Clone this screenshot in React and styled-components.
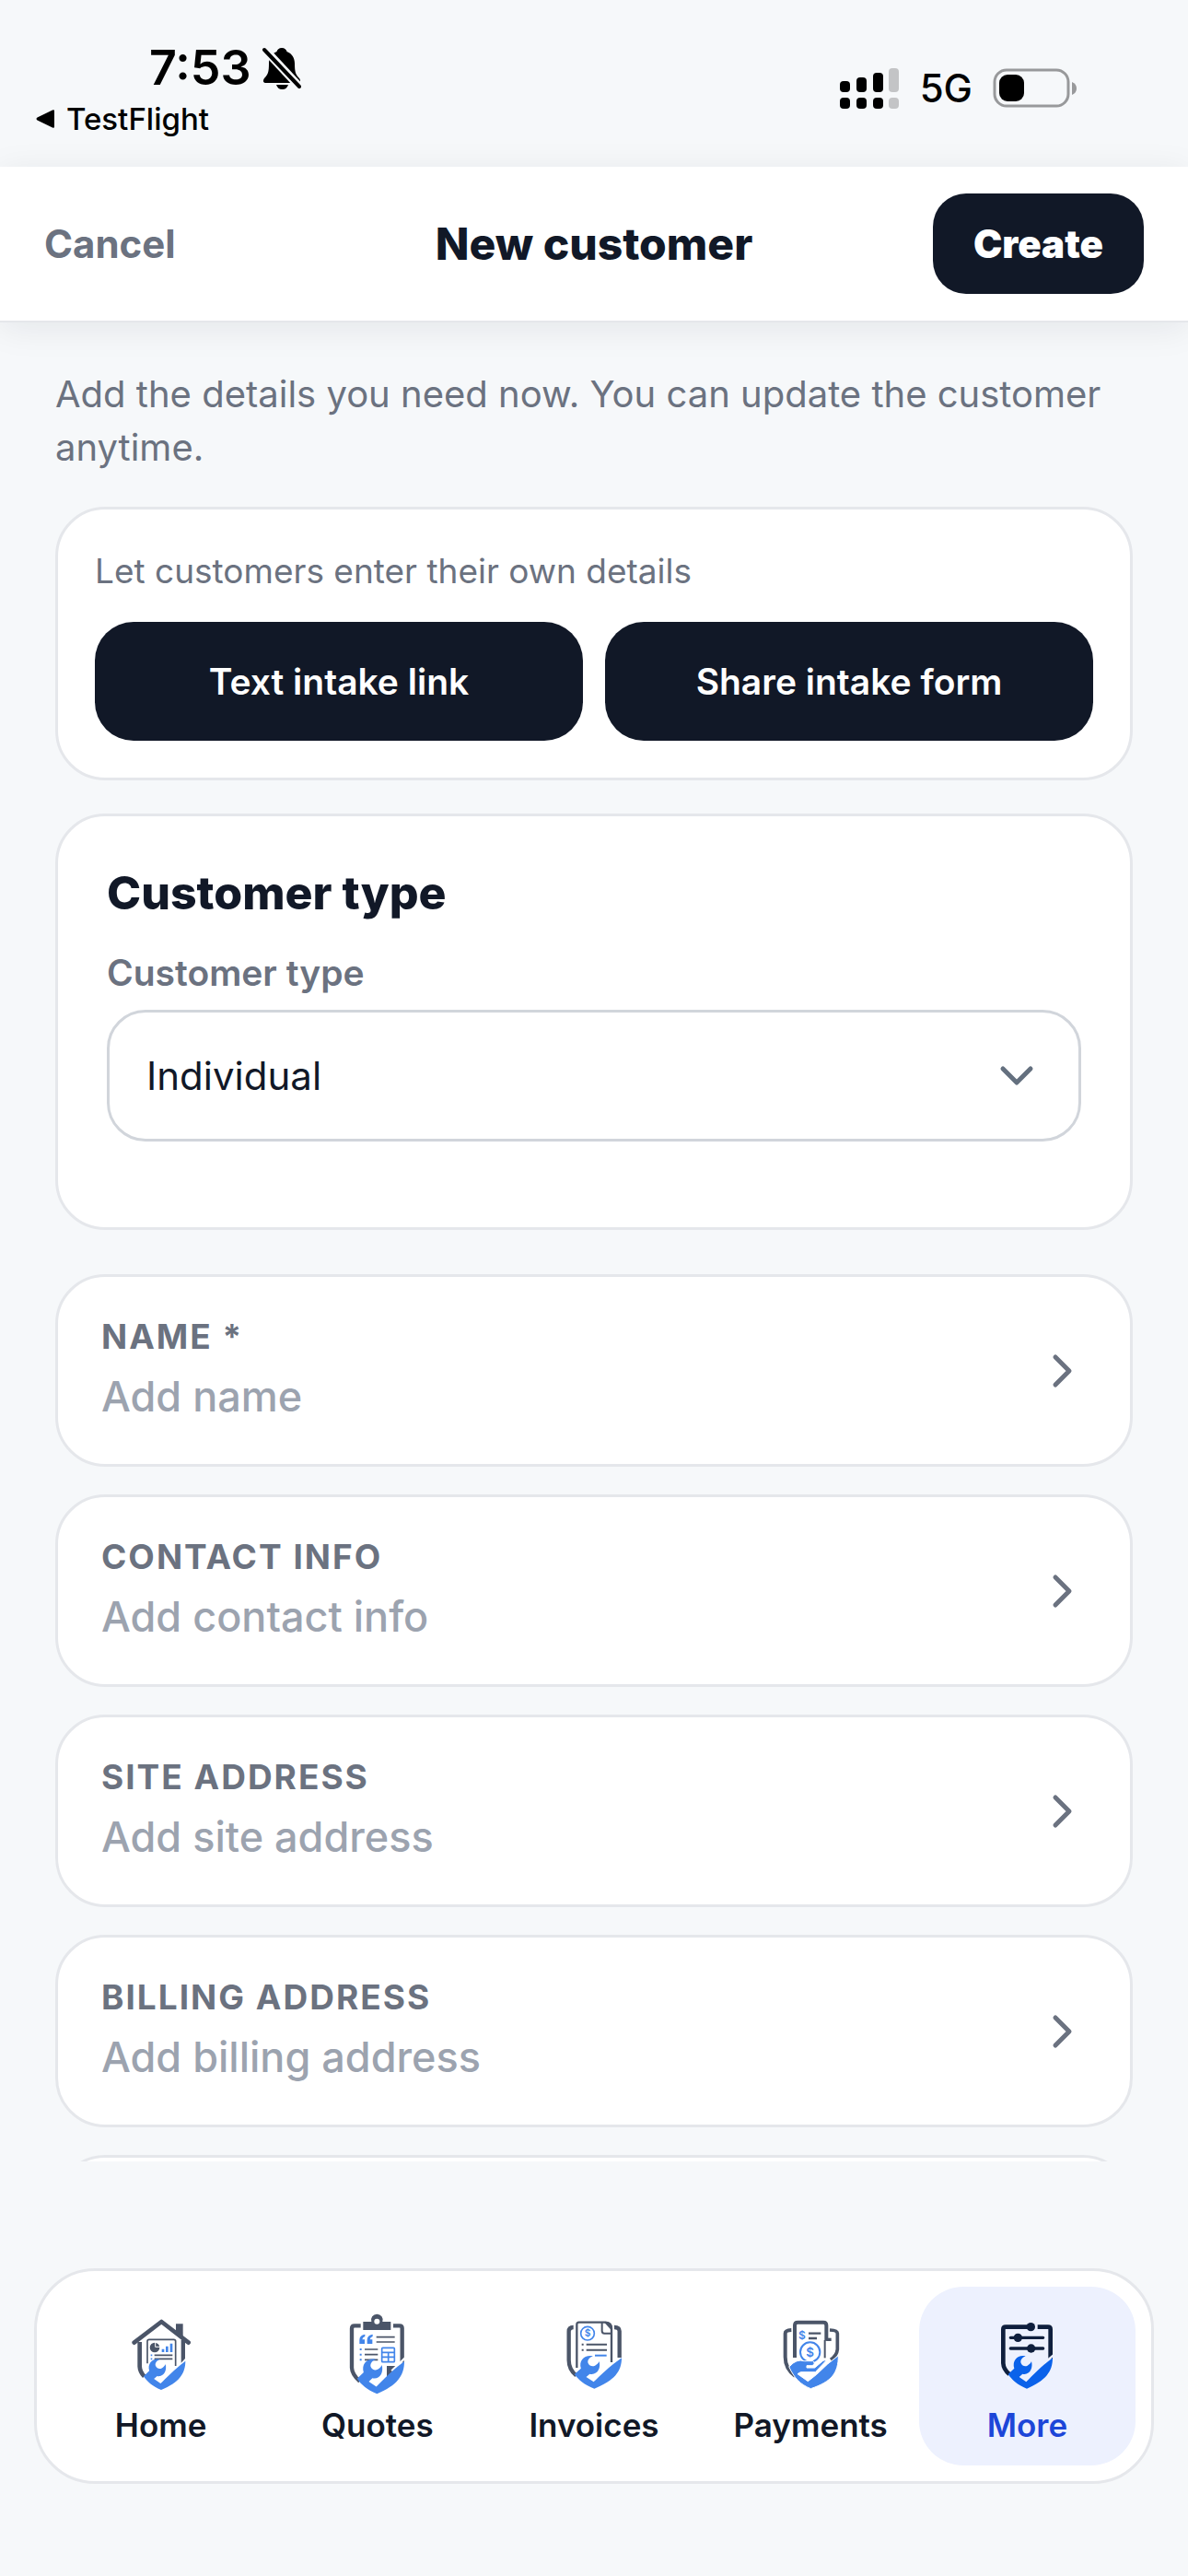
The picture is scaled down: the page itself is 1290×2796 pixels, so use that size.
import { useState } from "react";
import styled, { createGlobalStyle } from "styled-components";

const GlobalStyle = createGlobalStyle`
  * {
    box-sizing: border-box;
  }

  body {
    margin: 0;
    background: #f6f8fa;
    color: #111827;
    font-family: Inter, "Liberation Sans", sans-serif;
  }

  button,
  select {
    font-family: inherit;
  }
`;

const Screen = styled.div`
  display: flex;
  flex-direction: column;
  height: 100vh;
`;

const StatusBar = styled.div`
  display: flex;
  justify-content: space-between;
  align-items: flex-start;
  padding: 42px 120px 32px 39px;
  color: #000;
`;

const StatusLeft = styled.div`
  display: flex;
  flex-direction: column;
  gap: 3px;
`;

const Clock = styled.div`
  display: flex;
  align-items: center;
  gap: 12px;
  padding-left: 123px;
  font-size: 52px;
  font-weight: 600;
  line-height: 64px;
`;

const BackLink = styled.a`
  display: flex;
  align-items: center;
  gap: 12px;
  color: #000;
  font-size: 33px;
  font-weight: 500;
  line-height: 40px;
  text-decoration: none;
`;

const StatusRight = styled.div`
  display: flex;
  align-items: center;
  gap: 22px;
  padding-top: 26px;
  font-size: 42px;
  font-weight: 500;
  line-height: 56px;
`;

const Header = styled.header`
  display: grid;
  grid-template-columns: 1fr auto 1fr;
  align-items: center;
  padding: 29px 48px;
  background: #fff;
  border-bottom: 2px solid #e5e7eb;
  box-shadow: 0 6px 36px rgba(15, 23, 42, 0.08);
  z-index: 1;
`;

const Title = styled.h1`
  margin: 0;
  font-size: 48px;
  font-weight: 800;
  line-height: 56px;
`;

const CancelButton = styled.button`
  justify-self: start;
  padding: 0;
  border: none;
  background: none;
  color: #6b7280;
  font-size: 42px;
  font-weight: 700;
  line-height: 56px;
`;

const CreateButton = styled.button`
  justify-self: end;
  padding: 26px 44px;
  border: none;
  border-radius: 36px;
  background: #111827;
  color: #fff;
  font-size: 42px;
  font-weight: 900;
  line-height: 57px;
`;

const Content = styled.main`
  flex: 1;
  min-height: 0;
  overflow: hidden;
  padding: 49px 60px 0;
`;

const Intro = styled.p`
  margin: 0 0 35px;
  color: #6b7280;
  font-size: 40px;
  line-height: 58px;
`;

const Card = styled.section`
  border: 3px solid #e5e7eb;
  border-radius: 54px;
  background: #fff;
`;

const IntakeCard = styled(Card)`
  margin-bottom: 36px;
  padding: 39px 40px 40px;
`;

const IntakeText = styled.p`
  margin: 0 0 27px;
  color: #6b7280;
  font-size: 37px;
  line-height: 56px;
`;

const IntakeActions = styled.div`
  display: grid;
  grid-template-columns: 1fr 1fr;
  gap: 24px;
`;

const IntakeButton = styled.button`
  padding: 36px 24px;
  border: none;
  border-radius: 42px;
  background: #111827;
  color: #fff;
  font-size: 39px;
  font-weight: 600;
  line-height: 57px;
`;

const TypeCard = styled(Card)`
  margin-bottom: 48px;
  padding: 54px 53px 93px;
`;

const CardTitle = styled.h2`
  margin: 0 0 30px;
  font-size: 50px;
  font-weight: 800;
  line-height: 58px;
`;

const FieldLabel = styled.label`
  display: block;
  margin-bottom: 12px;
  color: #6b7280;
  font-size: 39px;
  font-weight: 600;
  line-height: 56px;
`;

const SelectWrap = styled.div`
  display: grid;
  align-items: center;

  > * {
    grid-area: 1 / 1;
  }

  svg {
    justify-self: end;
    margin-right: 50px;
    pointer-events: none;
  }
`;

const Select = styled.select`
  width: 100%;
  padding: 40px;
  appearance: none;
  border: 3px solid #d1d5db;
  border-radius: 42px;
  background: #fff;
  color: #111827;
  font-size: 42px;
  line-height: 57px;
`;

const SectionList = styled.div`
  display: flex;
  flex-direction: column;
  gap: 30px;
`;

const SectionRow = styled.button`
  display: flex;
  justify-content: space-between;
  align-items: center;
  padding: 38px 61px 38px 47px;
  border: 3px solid #e5e7eb;
  border-radius: 54px;
  background: #fff;
  text-align: left;
`;

const SectionLabel = styled.span`
  display: block;
  margin-bottom: 3px;
  color: #6b7280;
  font-size: 37px;
  font-weight: 700;
  letter-spacing: 2px;
  line-height: 54px;
  text-transform: uppercase;
`;

const SectionValue = styled.span`
  display: block;
  color: #9ca3af;
  font-size: 45px;
  font-weight: 500;
  line-height: 70px;
`;

const NotesField = styled.textarea`
  height: 209px;
  padding: 38px 47px;
  border: 3px solid #e5e7eb;
  border-radius: 54px;
  background: #fff;
  font-size: 42px;
  resize: none;
`;

const NavArea = styled.div`
  padding: 116px 37px 100px;
`;

const TabBar = styled.nav`
  display: grid;
  grid-template-columns: repeat(5, 1fr);
  padding: 17px;
  border: 3px solid #e5e7eb;
  border-radius: 66px;
  background: #fff;
`;

const Tab = styled.a`
  display: flex;
  flex-direction: column;
  align-items: center;
  gap: 10px;
  padding: 28px 0 22px;
  border-radius: 48px;
  background: ${(props) => (props.$active ? "#edf1fe" : "transparent")};
  color: ${(props) => (props.$active ? "#1d46d8" : "#111827")};
  font-size: 35px;
  font-weight: 600;
  line-height: 44px;
  text-decoration: none;
`;

const SLATE = "#4b5568";
const BLUE = "#4285ea";
const NAVY = "#0f1f3d";

const BellOffIcon = () => (
  <svg width="42" height="46" viewBox="0 0 42 46" aria-hidden="true">
    <path
      d="M21 1c3 0 5 2 5.500 4C32 7 35 12 35 18c0 9 1 12 5 16 2 3 1 5-2 5H4c-3 0-4-2-2-5 4-4 5-7 5-16 0-6 3-11 8.500-13C16 3 18 1 21 1z"
      fill="#000"
    />
    <path d="M15 41h13c-1 3-3 5-6.500 5S16 44 15 41z" fill="#000" />
    <path d="M0 0l41 44" stroke="#f6f8fa" strokeWidth="9" />
    <path d="M2 3l38 40" stroke="#000" strokeWidth="4" strokeLinecap="round" />
  </svg>
);

const BackArrow = () => (
  <svg width="21" height="22" viewBox="0 0 21 22" aria-hidden="true">
    <path d="M1.500 9.500L18 1.500q2-1 2 1v17q0 2-2 1L1.500 12.500q-2-1.500 0-3z" fill="#000" />
  </svg>
);

const SignalIcon = () => (
  <svg width="65" height="46" viewBox="0 0 65 46" aria-hidden="true">
    <g fill="#000">
      <rect x="0" y="15" width="11" height="12" rx="4" />
      <rect x="18" y="11" width="11" height="16" rx="4" />
      <rect x="36" y="6" width="11" height="21" rx="4" />
      <rect x="0" y="33" width="11" height="12" rx="4" />
      <rect x="18" y="33" width="11" height="12" rx="4" />
      <rect x="36" y="33" width="11" height="12" rx="4" />
    </g>
    <g fill="#c3c4c6">
      <rect x="53" y="1" width="11" height="26" rx="4" />
      <rect x="53" y="33" width="11" height="12" rx="4" />
    </g>
  </svg>
);

const BatteryIcon = () => (
  <svg width="92" height="44" viewBox="0 0 92 44" aria-hidden="true">
    <rect x="2" y="2" width="80" height="39" rx="13" fill="none" stroke="#98999b" strokeWidth="3" />
    <rect x="7" y="7" width="27" height="29" rx="9" fill="#000" />
    <path d="M86 15q5 2 5 7t-5 7z" fill="#98999b" />
  </svg>
);

const ChevronRight = () => (
  <svg width="26" height="40" viewBox="0 0 26 40" fill="none" aria-hidden="true">
    <path d="M6 5l15 15L6 35" stroke="#6b7280" strokeWidth="5" strokeLinecap="round" strokeLinejoin="round" />
  </svg>
);

const ChevronDown = () => (
  <svg width="40" height="26" viewBox="0 0 40 26" fill="none" aria-hidden="true">
    <path d="M5 5l15 15L35 5" stroke="#64707f" strokeWidth="5" strokeLinecap="round" strokeLinejoin="round" />
  </svg>
);

// lower half of the shield with the wrench, origin at the bottom tip
const WrenchShield = ({ x, y, sx = 1, sy = 1, color = BLUE }) => (
  <path
    transform={`translate(${x} ${y}) scale(${sx} ${sy})`}
    fill={color}
    d="M84-100C84-56 62-26 0 0C-31-13-49-29-61-47L-41-66C-49-92-29-112-4-106C-17-101-22-91-19-83C-15-74-6-71 2-75C9-79 13-84 15-89C21-68 10-43-14-48L-25-38L-2-22C18-42 44-70 84-100Z"
  />
);

const HomeIcon = () => (
  <svg width="90" height="90" viewBox="30 60 270 270" fill="none" aria-hidden="true">
    <path d="M213 97h23v45l-23-18z" fill={SLATE} />
    <path d="M77 158L166 90l88 68" stroke={SLATE} strokeWidth="14" strokeLinecap="round" strokeLinejoin="round" />
    <path d="M95 156v80q1 18 15 32" stroke={SLATE} strokeWidth="14" />
    <path d="M230 150h13v60l-13 14z" fill={SLATE} />
    <path d="M120 226v-72q0-6 6-6h80q6 0 6 6v80" stroke={SLATE} strokeWidth="5" />
    <circle cx="144" cy="174" r="16" fill={SLATE} />
    <path d="M146 156v16h17" stroke="#fff" strokeWidth="3" />
    <path d="M171 179v10M184 170v19M198 161v28" stroke={BLUE} strokeWidth="8" />
    <path d="M143 199h59M143 211h59" stroke={SLATE} strokeWidth="5" />
    <path d="M131 199h5M131 211h5" stroke={BLUE} strokeWidth="5" />
    <WrenchShield x="165" y="312" sx="0.94" sy="0.94" />
  </svg>
);

const QuotesIcon = () => (
  <svg width="90" height="90" viewBox="735 60 270 270" fill="none" aria-hidden="true">
    <path d="M815 103h-20q-9 0-9 9v128q1 22 26 44" stroke={SLATE} strokeWidth="13" />
    <path d="M921 103h21q8 0 8 8v112" stroke={SLATE} strokeWidth="13" />
    <path d="M823 90h27a19 19 0 1 1 36 0h27v27h-90z" fill={SLATE} />
    <circle cx="868" cy="89" r="9" fill="#fff" />
    <path d="M829 131q-18 3-18 18v13h17v-14h-8q1-8 9-10zM854 131q-18 3-18 18v13h17v-14h-8q1-8 9-10z" fill={BLUE} />
    <path d="M866 140h60M866 156h60M828 180h43M828 197h43M828 214h43" stroke={SLATE} strokeWidth="5" />
    <path d="M812 180h6M812 197h6M812 214h6" stroke={BLUE} strokeWidth="6" />
    <rect x="884" y="175" width="41" height="46" rx="3" stroke={BLUE} strokeWidth="5" />
    <path d="M884 190h41M884 205h41M905 190v30" stroke={BLUE} strokeWidth="5" />
    <path d="M900 234h38l-38 36z" fill={SLATE} />
    <path d="M962 206l-46 44" stroke="#fff" strokeWidth="7" />
    <WrenchShield x="868" y="325" sx="1.060" sy="1.060" />
  </svg>
);

const InvoicesIcon = () => (
  <svg width="90" height="90" viewBox="179 60 270 270" fill="none" aria-hidden="true">
    <path d="M247 108q-15 0-15 14v93q0 30 24 50" stroke={SLATE} strokeWidth="13" />
    <path d="M380 108q17 0 17 13v86" stroke={SLATE} strokeWidth="13" />
    <path d="M258 240V99q0-7 7-7h87q19 2 19 19v111" stroke={SLATE} strokeWidth="7" />
    <path d="M340 92v28q0 8 8 8h23" stroke={SLATE} strokeWidth="6" />
    <path d="M346 91h14q10 4 12 12v16z" fill={SLATE} />
    <circle cx="293" cy="128" r="22" stroke={BLUE} strokeWidth="5" />
    <text x="293" y="139" fill={BLUE} fontSize="31" fontWeight="600" textAnchor="middle">$</text>
    <path d="M289 164h67M289 182h67" stroke={SLATE} strokeWidth="6" />
    <path d="M274 164h6M274 182h6" stroke={SLATE} strokeWidth="6" />
    <path d="M317 200h38" stroke={BLUE} strokeWidth="6" />
    <WrenchShield x="315" y="308" sx="1.060" />
  </svg>
);

const PaymentsIcon = () => (
  <svg width="90" height="90" viewBox="885 60 270 270" fill="none" aria-hidden="true">
    <path d="M958 117q-20 1-20 11v77q0 38 32 62" stroke={SLATE} strokeWidth="12" />
    <path d="M1083 117q25 1 25 11v52q-2 20-22 34" stroke={SLATE} strokeWidth="11" />
    <path d="M969 207v-105q0-10 10-10h83q10 0 10 10v50" stroke={SLATE} strokeWidth="12" />
    <path d="M1067 150v58" stroke={SLATE} strokeWidth="6" />
    <path d="M1072 148h16" stroke={SLATE} strokeWidth="10" />
    <text x="993" y="147" fill={BLUE} fontSize="36" fontWeight="600" textAnchor="middle">$</text>
    <path d="M1014 128h40M1014 144h27" stroke={SLATE} strokeWidth="7" />
    <circle cx="1019" cy="189" r="32" fill="#fff" stroke={BLUE} strokeWidth="6" />
    <text x="1019" y="203" fill={BLUE} fontSize="40" fontWeight="600" textAnchor="middle">$</text>
    <path
      d="M952 236q22-26 48-18h28q10 8-2 15h-18v7h26l26-22q7-5 10 0l-34 36h-48l-10 6 34 24 28-22q35-36 71-62c0 58-22 85-90 108-34-14-54-34-71-72z"
      fill={BLUE}
      stroke="#fff"
      strokeWidth="3"
    />
  </svg>
);

const MoreIcon = () => (
  <svg width="90" height="90" viewBox="271 120 270 270" fill="none" aria-hidden="true">
    <path d="M412 167h-75q-8 0-8 8v110q1 20 20 36" stroke={NAVY} strokeWidth="14" />
    <path d="M441 167h34q8 0 8 8v96" stroke={NAVY} strokeWidth="14" />
    <path d="M353 202h106M353 237h106" stroke={NAVY} strokeWidth="10" strokeLinecap="round" />
    <circle cx="419" cy="167" r="14" fill={NAVY} />
    <circle cx="377" cy="202" r="14" fill={NAVY} />
    <circle cx="420" cy="237" r="14" fill={NAVY} />
    <path d="M496 256l-30 26" stroke="#edf1fe" strokeWidth="7" />
    <WrenchShield x="406" y="368" color="#0b62ea" />
  </svg>
);

const sections = [
  { label: "Name *", value: "Add name" },
  { label: "Contact info", value: "Add contact info" },
  { label: "Site address", value: "Add site address" },
  { label: "Billing address", value: "Add billing address" },
];

const tabs = [
  { name: "Home", Icon: HomeIcon },
  { name: "Quotes", Icon: QuotesIcon },
  { name: "Invoices", Icon: InvoicesIcon },
  { name: "Payments", Icon: PaymentsIcon },
  { name: "More", Icon: MoreIcon },
];

const App = () => {
  const [customerType, setCustomerType] = useState("Individual");
  const [activeTab, setActiveTab] = useState("More");

  return (
    <Screen>
      <GlobalStyle />
      <StatusBar>
        <StatusLeft>
          <Clock>
            7:53
            <BellOffIcon />
          </Clock>
          <BackLink href="#testflight">
            <BackArrow />
            TestFlight
          </BackLink>
        </StatusLeft>
        <StatusRight>
          <SignalIcon />
          5G
          <BatteryIcon />
        </StatusRight>
      </StatusBar>

      <Header>
        <CancelButton type="button">Cancel</CancelButton>
        <Title>New customer</Title>
        <CreateButton type="button">Create</CreateButton>
      </Header>

      <Content>
        <Intro>Add the details you need now. You can update the customer anytime.</Intro>

        <IntakeCard>
          <IntakeText>Let customers enter their own details</IntakeText>
          <IntakeActions>
            <IntakeButton type="button">Text intake link</IntakeButton>
            <IntakeButton type="button">Share intake form</IntakeButton>
          </IntakeActions>
        </IntakeCard>

        <TypeCard>
          <CardTitle>Customer type</CardTitle>
          <FieldLabel htmlFor="customer-type">Customer type</FieldLabel>
          <SelectWrap>
            <Select
              id="customer-type"
              value={customerType}
              onChange={(event) => setCustomerType(event.target.value)}
            >
              <option>Individual</option>
              <option>Business</option>
            </Select>
            <ChevronDown />
          </SelectWrap>
        </TypeCard>

        <SectionList>
          {sections.map((section) => (
            <SectionRow key={section.label} type="button">
              <span>
                <SectionLabel>{section.label}</SectionLabel>
                <SectionValue>{section.value}</SectionValue>
              </span>
              <ChevronRight />
            </SectionRow>
          ))}
          <NotesField aria-label="Notes" />
        </SectionList>
      </Content>

      <NavArea>
        <TabBar>
          {tabs.map(({ name, Icon }) => (
            <Tab
              key={name}
              href={`#${name.toLowerCase()}`}
              $active={name === activeTab}
              onClick={() => setActiveTab(name)}
            >
              <Icon />
              {name}
            </Tab>
          ))}
        </TabBar>
      </NavArea>
    </Screen>
  );
};

export default App;
